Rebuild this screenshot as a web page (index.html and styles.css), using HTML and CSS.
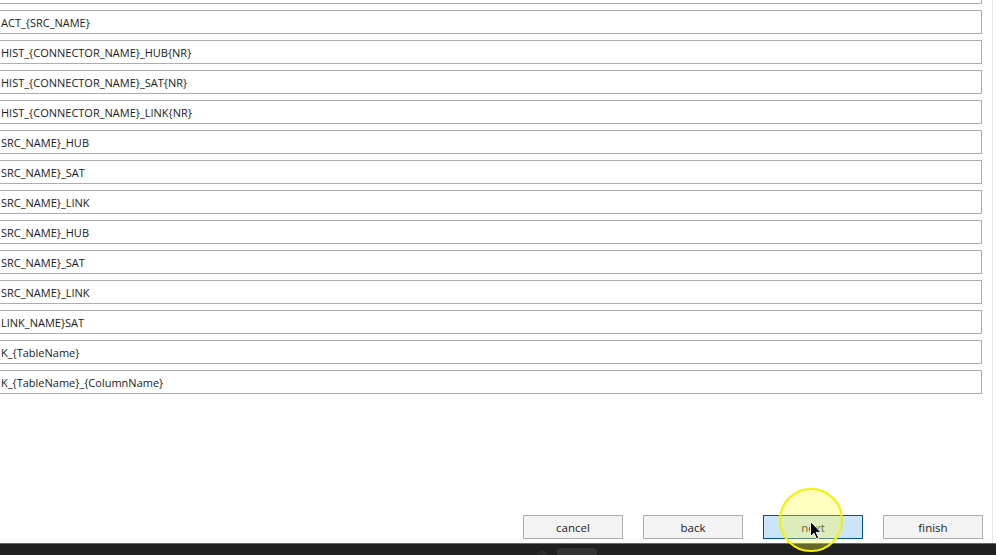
FILE: index.html
```html
<!DOCTYPE html>
<html>
<head>
<meta charset="utf-8">
<link rel="stylesheet" href="styles.css">
</head>
<body>
<div class="screen">
  <div class="window">
    <div class="fields">
      <div class="field"></div>
      <div class="field">ACT_{SRC_NAME}</div>
      <div class="field">HIST_{CONNECTOR_NAME}_HUB{NR}</div>
      <div class="field">HIST_{CONNECTOR_NAME}_SAT{NR}</div>
      <div class="field">HIST_{CONNECTOR_NAME}_LINK{NR}</div>
      <div class="field">SRC_NAME}_HUB</div>
      <div class="field">SRC_NAME}_SAT</div>
      <div class="field">SRC_NAME}_LINK</div>
      <div class="field">SRC_NAME}_HUB</div>
      <div class="field">SRC_NAME}_SAT</div>
      <div class="field">SRC_NAME}_LINK</div>
      <div class="field">LINK_NAME}SAT</div>
      <div class="field">K_{TableName}</div>
      <div class="field">K_{TableName}_{ColumnName}</div>
    </div>
    <div class="buttons">
      <button class="btn">cancel</button>
      <button class="btn">back</button>
      <button class="btn btn-focus">next</button>
      <button class="btn">finish</button>
    </div>
  </div>
  <div class="taskbar">
    <span class="tb-dot"></span>
    <span class="tb-item"></span>
  </div>
  <div class="cursor-ring"></div>
  <svg class="cursor" width="12" height="19" viewBox="0 0 12 19">
    <path d="M0.5 0.5 L0.5 15.5 L4 12.2 L6.6 18.2 L8.8 17.2 L6.3 11.4 L11 11.4 Z" fill="#000" stroke="#fff" stroke-width="1"/>
  </svg>
</div>
</body>
</html>
```
FILE: styles.css
```css
html, body {
  margin: 0;
  padding: 0;
  background: #ffffff;
}
.screen {
  position: relative;
  width: 996px;
  height: 555px;
  display: flex;
  flex-direction: column;
  overflow: hidden;
  font-family: "Open Sans", "Noto Sans", sans-serif;
}
.window {
  width: 992px;
  height: 543px;
  border-right: 1px solid #e6e6e6;
  display: flex;
  flex-direction: column;
  background: #fff;
}
.fields {
  margin-top: -20px;
  padding-right: 10px;
  display: flex;
  flex-direction: column;
  gap: 6px;
}
.field {
  height: 22px;
  margin-left: -10px;
  border: 1px solid #adadad;
  padding-left: 10px;
  box-sizing: content-box;
  font-size: 11px;
  line-height: 24px;
  color: #1b1b1b;
  white-space: nowrap;
  overflow: hidden;
}
.buttons {
  margin-top: auto;
  padding: 0 9px 4px 0;
  display: flex;
  justify-content: flex-end;
  gap: 20px;
}
.btn {
  width: 100px;
  height: 24px;
  margin: 0;
  padding: 0;
  border: 1px solid #adadad;
  background: #f3f3f3;
  font-family: "Open Sans", "Noto Sans", sans-serif;
  font-size: 11.5px;
  color: #1b1b1b;
  line-height: 22px;
  padding-top: 1px;
}
.btn-focus {
  background: #cce4f7;
  border-color: #005499;
}
.cursor-ring {
  position: absolute;
  left: 779px;
  top: 488px;
  width: 60px;
  height: 60px;
  border: 2px solid #f2f200;
  border-radius: 50%;
  background: rgba(255, 255, 60, 0.32);
}
.cursor {
  position: absolute;
  left: 810px;
  top: 521px;
}
.taskbar {
  height: 12px;
  background: #202020;
  border-top: 1px solid #6a6a6a;
  display: flex;
  align-items: flex-end;
  padding-left: 537px;
  gap: 10px;
  box-sizing: border-box;
}
.tb-dot {
  width: 10px;
  height: 5px;
  background: #2a2a2a;
  border-radius: 5px 5px 0 0;
}
.tb-item {
  width: 40px;
  height: 7px;
  background: #333333;
  border-radius: 4px 4px 0 0;
}
```
